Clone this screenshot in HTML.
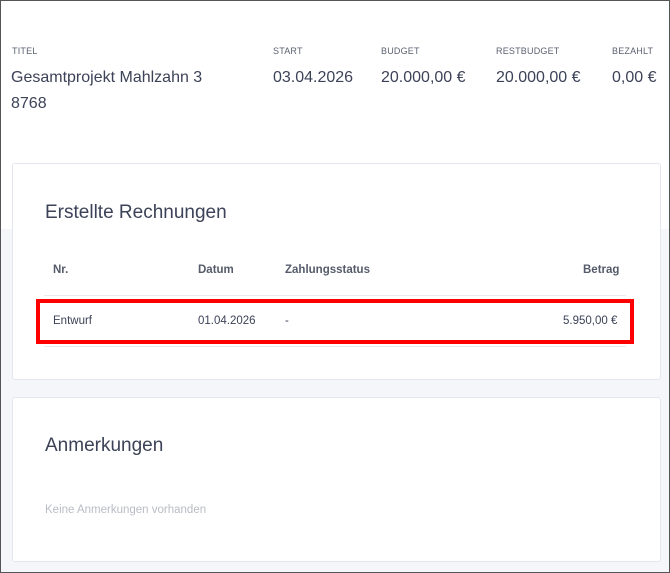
<!DOCTYPE html>
<html><head><style>
*{margin:0;padding:0;box-sizing:border-box}
body{width:670px;height:573px;overflow:hidden;font-family:"Liberation Sans",sans-serif;color:#3c4257;background:#fff}
.frame{position:absolute;left:0;top:0;width:670px;height:573px;border:1px solid #555;background:linear-gradient(#fff 0,#fff 228px,#f5f6f9 228px)}
.lbl{position:absolute;top:46px;font-size:9px;color:#5b6170;letter-spacing:0.2px}
.val{position:absolute;top:65px;font-size:16px;color:#3c4257;line-height:26px}
.card{position:absolute;left:12px;width:649px;background:#fff;border:1px solid #e3e6ec;border-radius:3px}
h2{position:absolute;left:32px;font-weight:normal;font-size:19px;color:#3c4257}
.th{position:absolute;top:264px;font-size:11.5px;font-weight:bold;color:#555b6a}
.td{position:absolute;top:315px;font-size:11.5px;color:#3c4257}
</style></head><body>
<div class="frame"></div>
<div class="lbl" style="left:12px">TITEL</div>
<div class="lbl" style="left:273px">START</div>
<div class="lbl" style="left:381px">BUDGET</div>
<div class="lbl" style="left:496px">RESTBUDGET</div>
<div class="lbl" style="left:612px">BEZAHLT</div>
<div class="val" style="left:11px">Gesamtprojekt Mahlzahn 3<br>8768</div>
<div class="val" style="left:273px">03.04.2026</div>
<div class="val" style="left:381px">20.000,00 €</div>
<div class="val" style="left:496px">20.000,00 €</div>
<div class="val" style="left:612px">0,00 €</div>

<div class="card" style="top:163px;height:217px">
<h2 style="top:38px">Erstellte Rechnungen</h2>
</div>
<div class="th" style="left:53px">Nr.</div>
<div class="th" style="left:198px">Datum</div>
<div class="th" style="left:285px">Zahlungsstatus</div>
<div class="th" style="left:583px">Betrag</div>
<div style="position:absolute;left:44px;top:295px;width:582px;height:1px;background:#e8eaef"></div>
<div style="position:absolute;left:44px;top:346px;width:582px;height:1px;background:#e8eaef"></div>
<div class="td" style="left:53px">Entwurf</div>
<div class="td" style="left:198px">01.04.2026</div>
<div class="td" style="left:285px">-</div>
<div class="td" style="left:563px">5.950,00 €</div>
<div style="position:absolute;left:36px;top:299px;width:598px;height:45px;border:4px solid #ff0000"></div>

<div class="card" style="top:397px;height:165px">
<h2 style="top:37px">Anmerkungen</h2>
<div style="position:absolute;left:32px;top:106px;font-size:11.5px;color:#b9bcc4">Keine Anmerkungen vorhanden</div>
</div>
</body></html>
